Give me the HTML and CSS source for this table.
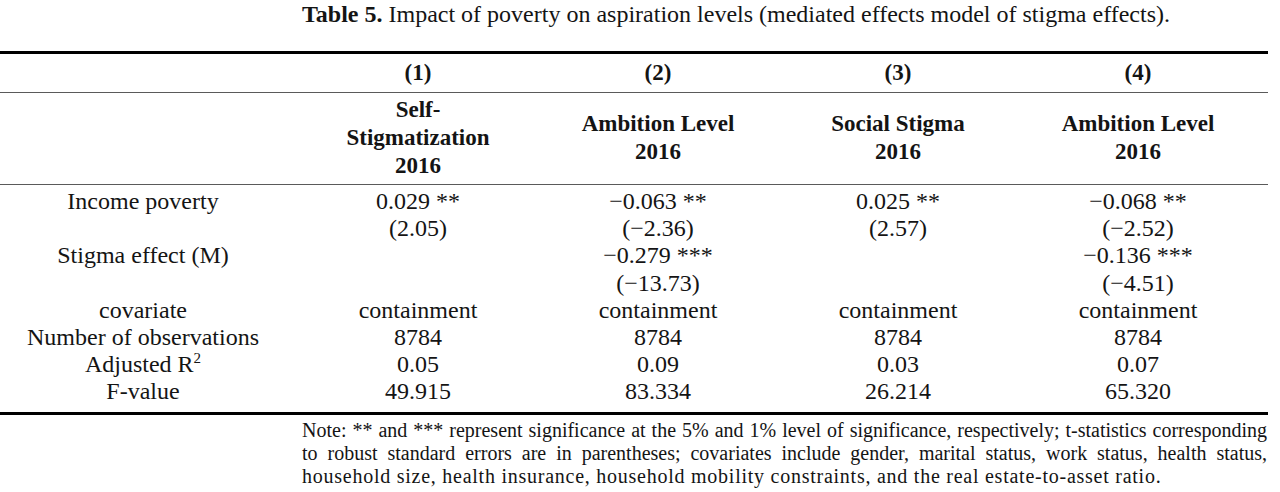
FILE: index.html
```html
<!DOCTYPE html>
<html lang="en">
<head>
<meta charset="utf-8">
<title>Table 5</title>
<link rel="stylesheet" href="styles.css">
</head>
<body>
<div class="page">
  <p class="caption"><b>Table 5.</b> Impact of poverty on aspiration levels (mediated effects model of stigma effects).</p>
  <table class="reg">
    <colgroup>
      <col class="c-label">
      <col class="c-num">
      <col class="c-num">
      <col class="c-num">
      <col class="c-last">
    </colgroup>
    <thead>
      <tr class="h-num">
        <th></th><th>(1)</th><th>(2)</th><th>(3)</th><th>(4)</th>
      </tr>
      <tr class="h-name">
        <th></th>
        <th>Self-<br>Stigmatization<br>2016</th>
        <th>Ambition Level<br>2016</th>
        <th>Social Stigma<br>2016</th>
        <th>Ambition Level<br>2016</th>
      </tr>
    </thead>
    <tbody>
      <tr class="first">
        <td class="label">Income poverty</td><td>0.029 **</td><td>−0.063 **</td><td>0.025 **</td><td>−0.068 **</td>
      </tr>
      <tr>
        <td class="label"></td><td>(2.05)</td><td>(−2.36)</td><td>(2.57)</td><td>(−2.52)</td>
      </tr>
      <tr>
        <td class="label">Stigma effect (M)</td><td></td><td>−0.279 ***</td><td></td><td>−0.136 ***</td>
      </tr>
      <tr>
        <td class="label"></td><td></td><td>(−13.73)</td><td></td><td>(−4.51)</td>
      </tr>
      <tr>
        <td class="label">covariate</td><td>containment</td><td>containment</td><td>containment</td><td>containment</td>
      </tr>
      <tr>
        <td class="label">Number of observations</td><td>8784</td><td>8784</td><td>8784</td><td>8784</td>
      </tr>
      <tr>
        <td class="label">Adjusted R<sup>2</sup></td><td>0.05</td><td>0.09</td><td>0.03</td><td>0.07</td>
      </tr>
      <tr class="last">
        <td class="label">F-value</td><td>49.915</td><td>83.334</td><td>26.214</td><td>65.320</td>
      </tr>
    </tbody>
  </table>
  <div class="note">
    <span class="line just">Note: ** and *** represent significance at the 5% and 1% level of significance, respectively; t-statistics corresponding</span>
    <span class="line just">to robust standard errors are in parentheses; covariates include gender, marital status, work status, health status,</span>
    <span class="line tail">household size, health insurance, household mobility constraints, and the real estate-to-asset ratio.</span>
  </div>
</div>
</body>
</html>
```

FILE: styles.css
```css
html, body {
  margin: 0;
  padding: 0;
  background: #ffffff;
}

body {
  font-family: "Liberation Serif", "DejaVu Serif", serif;
  color: #141414;
  width: 1280px;
  height: 492px;
  overflow: hidden;
}

.page {
  width: 1280px;
}

.caption {
  margin: 0 0 25px 302px;
  padding-top: 2px;
  font-size: 24px;
  line-height: 24px;
  white-space: nowrap;
}

.caption b {
  font-weight: bold;
}

.reg {
  border-collapse: separate;
  border-spacing: 0;
  table-layout: fixed;
  width: 1268px;
}

.c-label { width: 298px; }
.c-num { width: 240px; }
.c-last { width: 250px; }

.reg th,
.reg td {
  padding: 0;
  text-align: center;
  white-space: nowrap;
}

.reg th:first-child,
.reg td.label {
  padding-right: 12px;
}

.reg th:last-child,
.reg td:last-child {
  padding-right: 10px;
}

.reg th {
  font-weight: bold;
  font-size: 23px;
  line-height: 28px;
  vertical-align: middle;
}

.h-num th {
  border-top: 3px solid #000;
  border-bottom: 1px solid #5a5a5a;
  padding-top: 5px;
  padding-bottom: 5px;
}

.h-name th {
  border-bottom: 1px solid #5a5a5a;
  padding-top: 3px;
  padding-bottom: 4px;
}

.reg td {
  font-size: 24px;
  line-height: 27.2px;
  height: 27.2px;
  vertical-align: top;
}

.reg tr.first td {
  padding-top: 3px;
}

.reg tr.last td {
  padding-bottom: 6px;
  border-bottom: 3px solid #000;
}

.reg sup {
  font-size: 15px;
  line-height: 0;
  vertical-align: 9px;
}

.note {
  margin: 4px 0 0 302px;
  width: 965px;
  font-size: 20px;
  line-height: 23px;
}

.note .line {
  display: block;
  text-align: left;
}

.note .line.just {
  text-align: justify;
  text-align-last: justify;
}

.note .line.tail {
  letter-spacing: 0.75px;
}
```
